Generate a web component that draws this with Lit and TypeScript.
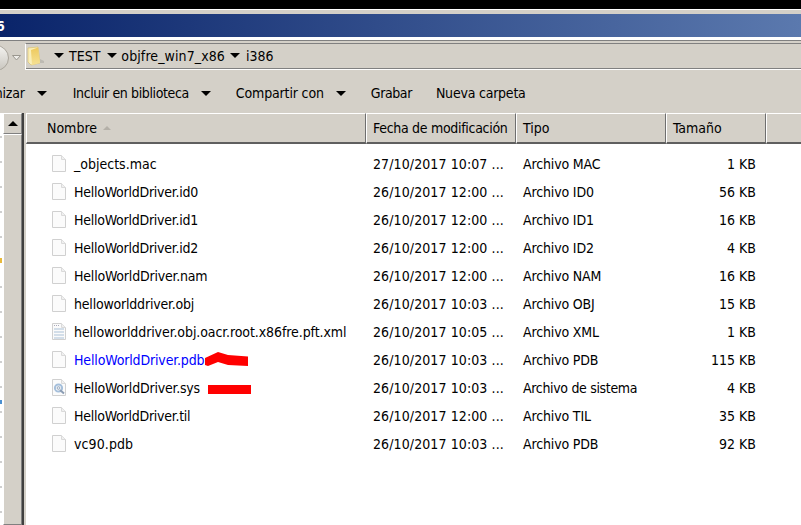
import { LitElement, html, css, svg } from "lit";
import { customElement } from "lit/decorators.js";

type Row = { n: string; d: string; t: string; s: string; ls: number; tl?: number; icon?: string; link?: boolean; mark?: string };
const rows: Row[] = [
  { n: "_objects.mac", d: "27/10/2017 10:07 ...", t: "Archivo MAC", s: "1 KB", ls: 0 },
  { n: "HelloWorldDriver.id0", d: "26/10/2017 12:00 ...", t: "Archivo ID0", s: "56 KB", ls: -0.25 },
  { n: "HelloWorldDriver.id1", d: "26/10/2017 12:00 ...", t: "Archivo ID1", s: "16 KB", ls: -0.25 },
  { n: "HelloWorldDriver.id2", d: "26/10/2017 12:00 ...", t: "Archivo ID2", s: "4 KB", ls: -0.25 },
  { n: "HelloWorldDriver.nam", d: "26/10/2017 12:00 ...", t: "Archivo NAM", s: "16 KB", ls: -0.2 },
  { n: "helloworlddriver.obj", d: "26/10/2017 10:03 ...", t: "Archivo OBJ", s: "15 KB", ls: -0.2 },
  { n: "helloworlddriver.obj.oacr.root.x86fre.pft.xml", d: "26/10/2017 10:05 ...", t: "Archivo XML", s: "1 KB", ls: -0.09, icon: "xml" },
  { n: "HelloWorldDriver.pdb", d: "26/10/2017 10:03 ...", t: "Archivo PDB", s: "115 KB", ls: -0.15, link: true, mark: "a" },
  { n: "HelloWorldDriver.sys", d: "26/10/2017 10:03 ...", t: "Archivo de sistema", s: "4 KB", ls: -0.2, tl: -0.33, icon: "sys", mark: "b" },
  { n: "HelloWorldDriver.til", d: "26/10/2017 12:00 ...", t: "Archivo TIL", s: "35 KB", ls: -0.25 },
  { n: "vc90.pdb", d: "26/10/2017 10:03 ...", t: "Archivo PDB", s: "92 KB", ls: 0.1 },
];

const page = svg`<path d="M1.5 .5H10.5L14.5 4.5V16.5H1.5Z" fill="#fbfbfb" stroke="#d0d0d0"/><path d="M10.5 .5V4.5H14.5" fill="#f0f0f0" stroke="#dadada"/>`;
function fileIcon(kind?: string) {
  return html`<svg class="fi" width="16" height="18" viewBox="0 0 16 18">
    ${page}
    ${kind === "xml" ? svg`<path d="M3 6H13M3 9H13M3 12H13M3 15H13" stroke="#d3dee9" stroke-width="2"/><path d="M3 2.5H9" stroke="#aab" stroke-dasharray="1 1"/>` : ""}
    ${kind === "sys" ? svg`<circle cx="7.5" cy="9" r="3.6" fill="none" stroke="#a5bfdb" stroke-width="2"/><circle cx="7.5" cy="9" r="1.4" fill="#e6edf5" stroke="#9aa9bc"/><path d="M9 11L13 14.5" stroke="#8b9cb3" stroke-width="2"/>` : ""}
  </svg>`;
}

@customElement("app-root")
export class AppRoot extends LitElement {
  static styles = css`
    :host { display: block; width: 801px; height: 525px; overflow: hidden; background: #d4d0c8;
      font-family: "DejaVu Sans Condensed", "DejaVu Sans", sans-serif; font-stretch: condensed; font-size: 14px; color: #000; }
    .col { display: flex; flex-direction: column; height: 525px; }
    .black { height: 9px; background: #000; flex: none; }
    .edge { height: 5px; background: #d4d0c8; border-top: 1px solid #fff; box-sizing: border-box; flex: none; }
    .title { height: 23px; flex: none; background: linear-gradient(90deg, #0a246a 0%, #5b79ae 100%); color: #fff;
      font-weight: 700; line-height: 24px; overflow: hidden; }
    .title span { display: block; margin-left: -4px; font-size: 14px; }
    .sep { height: 6px; flex: none; background: #d4d0c8; border-top: 1px solid #fff; box-shadow: inset 0 2px 0 #fff, inset 0 3px 0 #808080; box-sizing: border-box; }
    .nav { height: 27px; flex: none; display: flex; align-items: stretch; }
    .back { width: 25px; position: relative; overflow: hidden; flex: none; }
    .back i { position: absolute; left: -17px; top: 2px; width: 24px; height: 24px; border-radius: 50%; border: 1px solid #a9a59c;
      background: linear-gradient(#f4f3f0, #c9c6bf); }
    .drop { position: absolute; left: 12px; top: 12px; }
    .addr { flex: 1; border-top: 1px solid #808080; border-left: 1px solid #fff; border-bottom: 1px solid #fff;
      box-shadow: inset 0 -1px 0 #808080; display: flex; align-items: center; padding-bottom: 2px; box-sizing: border-box; white-space: nowrap; }
    .tri { width: 0; height: 0; border-left: 5px solid transparent; border-right: 5px solid transparent; border-top: 5px solid #000; display: inline-block; flex: none; }
    .m-folder { margin-left: 1px; }
    .m-t1 { margin-left: 9px; }
    .m-test { margin-left: 5px; }
    .m-t2 { margin-left: 7px; }
    .m-obj { margin-left: 4px; letter-spacing: .1px; }
    .m-t3 { margin-left: 5px; }
    .m-i386 { margin-left: 6px; }
    .tools { height: 43px; flex: none; display: flex; align-items: center; white-space: nowrap; padding-top: 3px; box-sizing: border-box; }
    .tools > span { flex: none; }
    .b0 { margin-left: -35px; letter-spacing: -.2px; }
    .tt { margin-left: 12px; }
    .b1 { margin-left: 26px; letter-spacing: -.38px; }
    .b2 { margin-left: 25px; letter-spacing: -.15px; }
    .b3 { margin-left: 25px; letter-spacing: -.4px; }
    .b4 { margin-left: 24px; letter-spacing: -.22px; }
    .main { flex: 1; display: flex; min-height: 0; }
    .side { width: 26px; flex: none; display: flex; }
    .pane { width: 3px; flex: none;
      background:
        linear-gradient(#e8b93a, #e8b93a) 0 145px / 2px 5px no-repeat,
        linear-gradient(#4a8fd0, #4a8fd0) 0 287px / 2px 4px no-repeat,
        repeating-linear-gradient(#fff 0, #fff 23px, #cfcfcf 23px, #cfcfcf 25px) 0 0 / 2px 100% no-repeat,
        #fff; }
    .sb { width: 19px; flex: none; border-right: 2px solid #404040; background: #d4d0c8; }
    .up { height: 21px; border: 1px solid; border-color: #fff #808080 #808080 #fff; box-sizing: border-box; display: flex; align-items: center; justify-content: center; }
    .up i { width: 0; height: 0; border-left: 5px solid transparent; border-right: 5px solid transparent; border-bottom: 5px solid #000; }
    .sb-th { height: 391px; border: 1px solid; border-color: #fff #808080 #808080 #fff; box-sizing: border-box; }
    .list { flex: 1; min-width: 0; }
    .hdr { height: 29px; display: grid; grid-template-columns: 340px 150px 150px 100px 35px; white-space: nowrap; }
    .hdr > div { border-top: 1px solid #fff; border-left: 1px solid #fff; border-right: 1px solid #6f6f6f; border-bottom: 2px solid #5f5f5f;
      box-sizing: border-box; padding-left: 6px; line-height: 28px; }
    .hdr > div:first-child { padding-left: 20px; }
    .hdr > div:last-child { border-right: none; }
    .hdr .fecha { letter-spacing: -.3px; }
    .sort { display: inline-block; width: 0; height: 0; border-left: 4px solid transparent; border-right: 4px solid transparent; border-bottom: 4px solid #b4b0a8; margin-left: 6px; vertical-align: 3px; }
    .body { background: #fff; height: 383px; padding-top: 8px; box-sizing: border-box; }
    .row { height: 28px; display: grid; grid-template-columns: 340px 150px 143px 97px; align-items: center; white-space: nowrap; }
    .name { display: flex; align-items: center; padding-left: 25px; gap: 7px; position: relative; }
    .fi { flex: none; }
    .link { color: #0000ff; }
    .date { padding-left: 7px; letter-spacing: .1px; }
    .type { padding-left: 7px; letter-spacing: -.15px; }
    .size { text-align: right; }
    .mark { position: absolute; }
    .ma { left: 178px; top: 0; }
    .mb { left: 181px; top: 5px; }
  `;
  render() {
    return html`<div class="col">
      <div class="black"></div>
      <div class="edge"></div>
      <div class="title"><span>6</span></div>
      <div class="sep"></div>
      <div class="nav">
        <div class="back"><i></i>
          <svg class="drop" width="9" height="6" viewBox="0 0 9 6"><path d="M.5 .5H8.5L4.5 5Z" fill="#eeece8" stroke="#9a978f"/></svg>
        </div>
        <div class="addr">
          <svg class="m-folder" width="18" height="20" viewBox="0 0 18 20">
            <defs><linearGradient id="fg" x1="0" y1="0" x2="0" y2="1"><stop offset="0" stop-color="#eec95c"/><stop offset="1" stop-color="#f5e194"/></linearGradient></defs>
            <path d="M1 2L11 1L13 17L4 19L1 16Z" fill="#f9eeb8" stroke="#d9be62" stroke-width=".6"/>
            <path d="M4 4L11 1.5L13 17L5 19Z" fill="url(#fg)"/>
            <path d="M13 13L17 15V17L13 17Z" fill="#bdbab2"/>
          </svg>
          <span class="tri m-t1"></span><span class="m-test">TEST</span>
          <span class="tri m-t2"></span><span class="m-obj">objfre_win7_x86</span>
          <span class="tri m-t3"></span><span class="m-i386">i386</span>
        </div>
      </div>
      <div class="tools">
        <span class="b0">Organizar</span><span class="tri tt"></span>
        <span class="b1">Incluir en biblioteca</span><span class="tri tt"></span>
        <span class="b2">Compartir con</span><span class="tri tt"></span>
        <span class="b3">Grabar</span>
        <span class="b4">Nueva carpeta</span>
      </div>
      <div class="main">
        <div class="side">
          <div class="pane"></div>
          <div class="sb"><div class="up"><i></i></div><div class="sb-th"></div></div>
        </div>
        <div class="list">
          <div class="hdr">
            <div>Nombre<i class="sort"></i></div><div class="fecha">Fecha de modificación</div><div>Tipo</div><div>Tamaño</div><div></div>
          </div>
          <div class="body">
            ${rows.map((r) => html`<div class="row">
              <div class="name">${fileIcon(r.icon)}<span class=${r.link ? "link" : ""} style="letter-spacing:${r.ls}px">${r.n}</span>
                ${r.mark === "a" ? html`<svg class="mark ma" width="46" height="16" viewBox="0 0 46 16"><path d="M1 7L14 1L24 4L44 5.5V15L24 14L14 11L4 15L1 14Z" fill="#f00"/></svg>` : ""}
                ${r.mark === "b" ? html`<svg class="mark mb" width="44" height="12" viewBox="0 0 44 12"><rect x="1" y="1" width="43" height="9" fill="#f00"/></svg>` : ""}
              </div>
              <div class="date">${r.d}</div><div class="type" style=${r.tl ? `letter-spacing:${r.tl}px` : ""}>${r.t}</div><div class="size">${r.s}</div>
            </div>`)}
          </div>
        </div>
      </div>
    </div>`;
  }
}
